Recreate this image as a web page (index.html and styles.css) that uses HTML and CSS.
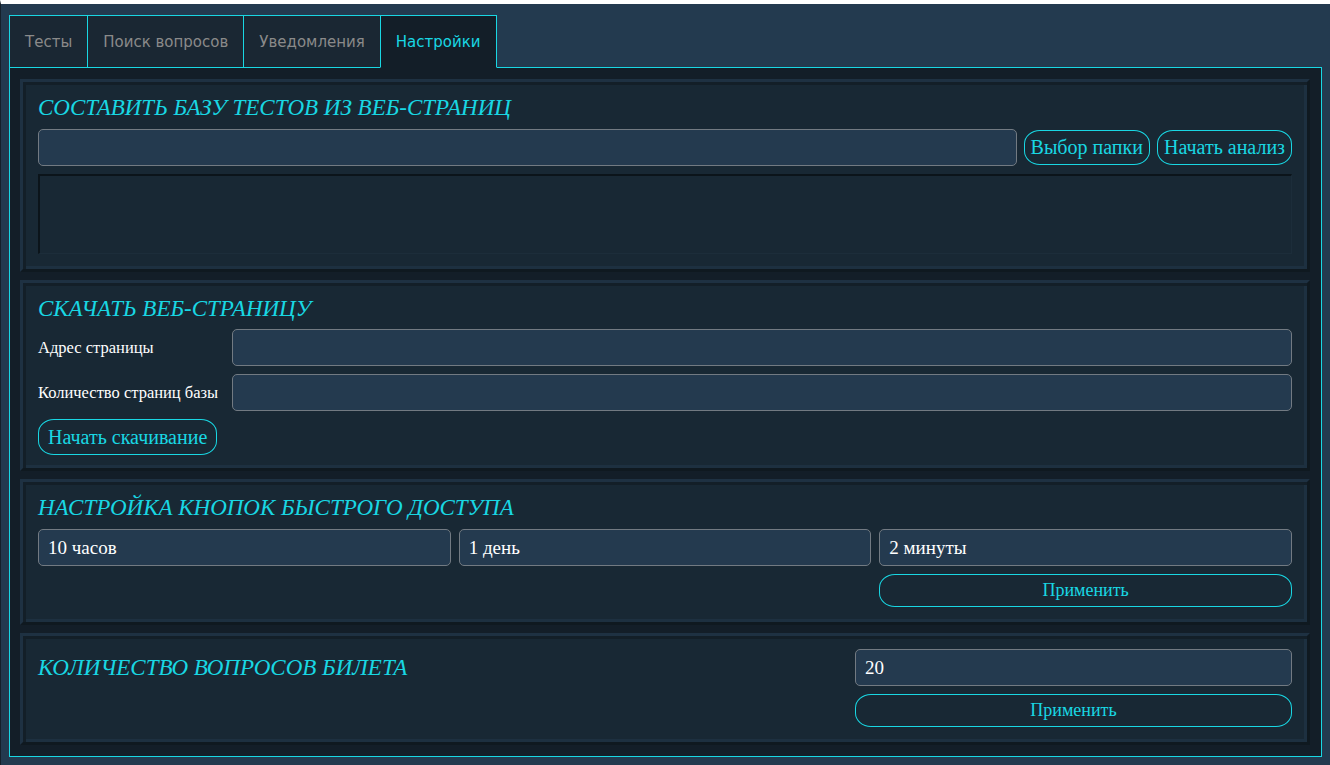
FILE: index.html
```html
<!DOCTYPE html>
<html lang="ru">
<head>
<meta charset="utf-8">
<title>Настройки</title>
<link rel="stylesheet" href="styles.css">
</head>
<body>
<div class="app">
  <div class="tabs">
    <div class="tab">Тесты</div>
    <div class="tab">Поиск вопросов</div>
    <div class="tab">Уведомления</div>
    <div class="tab active">Настройки</div>
  </div>
  <div class="panel">
    <section class="box">
      <h2 class="title">СОСТАВИТЬ БАЗУ ТЕСТОВ ИЗ ВЕБ-СТРАНИЦ</h2>
      <div class="row">
        <div class="input grow"></div>
        <button class="btn">Выбор папки</button>
        <button class="btn">Начать анализ</button>
      </div>
      <div class="log"></div>
    </section>

    <section class="box box-download">
      <h2 class="title">СКАЧАТЬ ВЕБ-СТРАНИЦУ</h2>
      <div class="form">
        <label class="label">Адрес страницы</label>
        <div class="input"></div>
        <label class="label">Количество страниц базы</label>
        <div class="input"></div>
      </div>
      <div class="row">
        <button class="btn btn-big">Начать скачивание</button>
      </div>
    </section>

    <section class="box">
      <h2 class="title">НАСТРОЙКА КНОПОК БЫСТРОГО ДОСТУПА</h2>
      <div class="triple">
        <div class="input">10 часов</div>
        <div class="input">1 день</div>
        <div class="input">2 минуты</div>
        <button class="btn btn-apply col3">Применить</button>
      </div>
    </section>

    <section class="box box-split">
      <h2 class="title title-side">КОЛИЧЕСТВО ВОПРОСОВ БИЛЕТА</h2>
      <div class="side">
        <div class="input">20</div>
        <button class="btn btn-apply">Применить</button>
      </div>
    </section>
  </div>
</div>
</body>
</html>
```
FILE: styles.css
```css
html, body {
  margin: 0;
  padding: 0;
}
body {
  background: #233a4f;
  border-top: 4px solid #ffffff;
  border-left: 1px solid #15202a;
  min-height: 761px;
  box-sizing: border-box;
  font-family: "Liberation Serif", "Times New Roman", serif;
}
.app {
  padding: 11px 8px 8px 8px;
}
.tabs {
  display: flex;
  position: relative;
  z-index: 1;
  margin-bottom: -1px;
}
.tab {
  font-family: "DejaVu Sans", Verdana, sans-serif;
  font-size: 15px;
  color: #8a8a8a;
  background: #1a2733;
  border: 1px solid #19d7e3;
  margin-right: -1px;
  box-sizing: border-box;
  height: 53px;
  padding: 0 15px;
  display: flex;
  align-items: center;
}
.tab.active {
  color: #19d7e3;
  background: #131e28;
  border-bottom-color: #131e28;
}
.panel {
  background: #131e28;
  border: 1px solid #19d7e3;
  padding: 11px 11px 11px 10px;
  display: flex;
  flex-direction: column;
  gap: 8px;
}
.box {
  background: #182834;
  border-style: solid;
  border-width: 3px;
  border-color: #1e3142 #0f1920 #0f1920 #1e3142;
  box-shadow: inset 3px 3px 0 #131f28, inset -3px -3px 0 #1d3040;
  padding: 13px 15px 15px 15px;
  display: flex;
  flex-direction: column;
  gap: 8px;
}
.box-download {
  gap: 7px;
  padding-bottom: 13px;
}
.box-download .form {
  margin-bottom: 1px;
}
.title {
  margin: 0;
  font-family: "Liberation Serif", "Times New Roman", serif;
  font-style: italic;
  font-weight: normal;
  font-size: 23px;
  line-height: 26px;
  color: #19d7e3;
}
.row {
  display: flex;
  gap: 7px;
  align-items: center;
}
.grow {
  flex: 1;
}
.input {
  height: 37px;
  box-sizing: border-box;
  background: #243a4f;
  border: 1px solid #727a82;
  border-radius: 5px;
  color: #ffffff;
  font-size: 19px;
  line-height: 35px;
  padding: 0 9px;
}
.btn {
  font-family: "Liberation Serif", "Times New Roman", serif;
  font-size: 20px;
  color: #19d7e3;
  background: #182834;
  border: 1px solid #19d7e3;
  border-radius: 16px / 14px;
  height: 35px;
  padding: 0 6px;
  cursor: pointer;
}
.btn-big {
  height: 36px;
  padding: 0 9px;
}
.btn-apply {
  font-size: 18px;
  height: 33px;
  width: 100%;
}
.log {
  height: 80px;
  box-sizing: border-box;
  border-style: solid;
  border-width: 2px 1px 1px 2px;
  border-color: #0b141a #1c2d3a #1c2d3a #0b141a;
  background: #182834;
}
.form {
  display: grid;
  grid-template-columns: 186px 1fr;
  column-gap: 8px;
  row-gap: 8px;
  align-items: center;
}
.label {
  color: #ffffff;
  font-size: 16.5px;
}
.triple {
  display: grid;
  grid-template-columns: 1fr 1fr 1fr;
  gap: 8px;
}
.col3 {
  grid-column: 3;
}
.box-split {
  flex-direction: row;
  align-items: flex-start;
}
.title-side {
  flex: 1;
  margin-top: 6px;
}
.side {
  width: 437px;
  display: flex;
  flex-direction: column;
  gap: 8px;
}
```
